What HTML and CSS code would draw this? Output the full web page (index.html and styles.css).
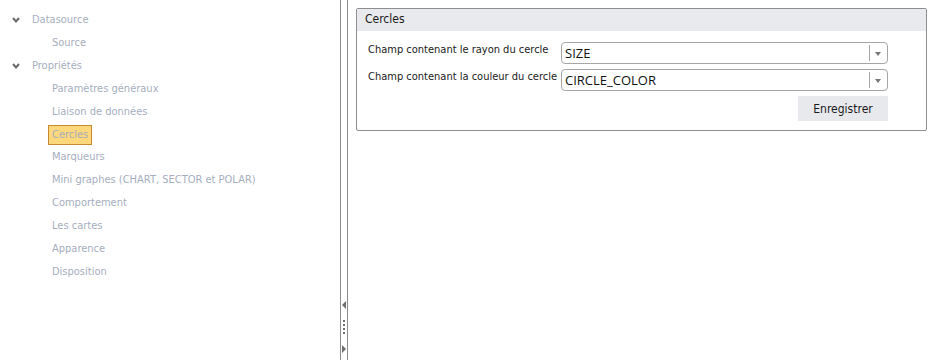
FILE: index.html
```html
<!DOCTYPE html>
<html lang="fr">
<head>
    <meta charset="UTF-8">
    <title>Configuration</title>
    <link rel="stylesheet" href="styles.css">
</head>
<body>
    <div class="layout">
        <div class="tree">
            <div class="node">
                <svg class="caret" width="8" height="6" viewBox="0 0 8 6"><path d="M1 1 L4 4.5 L7 1" fill="none" stroke="#6b6b6b" stroke-width="2"/></svg>
                <span class="label">Datasource</span>
            </div>
            <div class="child"><span class="label">Source</span></div>
            <div class="node">
                <svg class="caret" width="8" height="6" viewBox="0 0 8 6"><path d="M1 1 L4 4.5 L7 1" fill="none" stroke="#6b6b6b" stroke-width="2"/></svg>
                <span class="label">Propriétés</span>
            </div>
            <div class="child"><span class="label">Paramètres généraux</span></div>
            <div class="child"><span class="label">Liaison de données</span></div>
            <div class="child"><span class="label selected">Cercles</span></div>
            <div class="child"><span class="label">Marqueurs</span></div>
            <div class="child"><span class="label">Mini graphes (CHART, SECTOR et POLAR)</span></div>
            <div class="child"><span class="label">Comportement</span></div>
            <div class="child"><span class="label">Les cartes</span></div>
            <div class="child"><span class="label">Apparence</span></div>
            <div class="child"><span class="label">Disposition</span></div>
        </div>

        <div class="splitter">
            <div class="handle">
                <span class="arrow-left"></span>
                <span class="dots"><i></i><i></i><i></i><i></i></span>
                <span class="arrow-right"></span>
            </div>
        </div>

        <div class="content">
            <div class="panel">
                <div class="panel-header">Cercles</div>
                <div class="panel-body">
                    <div class="field">
                        <label>Champ contenant le rayon du cercle</label>
                        <div class="combo"><span class="combo-value">SIZE</span><span class="combo-btn"></span></div>
                    </div>
                    <div class="field">
                        <label>Champ contenant la couleur du cercle</label>
                        <div class="combo"><span class="combo-value">CIRCLE_COLOR</span><span class="combo-btn"></span></div>
                    </div>
                    <div class="actions">
                        <button type="button" class="btn">Enregistrer</button>
                    </div>
                </div>
            </div>
        </div>
    </div>
</body>
</html>
```

FILE: styles.css
```css
body {
    margin: 0;
    background-color: #ffffff;
    font-family: "DejaVu Sans Condensed", "DejaVu Sans", sans-serif;
    font-size: 11px;
}
.layout {
    display: flex;
    height: 360px;
}
.tree {
    width: 340px;
    padding-top: 9px;
    box-sizing: border-box;
}
.node, .child {
    display: flex;
    align-items: center;
    height: 22.85px;
}
.node {
    padding-left: 12px;
}
.child {
    padding-left: 48px;
}
.caret {
    margin-right: 11px;
}
.label {
    color: #a6aebe;
    padding: 2px 3px 3px;
    border: 1px solid transparent;
    white-space: nowrap;
}
.node .label {
    padding-left: 0;
}
.label.selected {
    background-color: #fdd77c;
    border-color: #c88a2e;
}
.splitter {
    width: 6px;
    border-left: 1px solid #8c8c8c;
    border-right: 1px solid #8c8c8c;
    display: flex;
    align-items: flex-end;
    justify-content: center;
}
.handle {
    display: flex;
    flex-direction: column;
    align-items: center;
    padding-bottom: 7px;
}
.arrow-left {
    width: 0;
    height: 0;
    border-top: 4px solid transparent;
    border-bottom: 4px solid transparent;
    border-right: 4px solid #6e6e6e;
}
.arrow-right {
    width: 0;
    height: 0;
    border-top: 4px solid transparent;
    border-bottom: 4px solid transparent;
    border-left: 4px solid #6e6e6e;
}
.dots {
    display: flex;
    flex-direction: column;
    gap: 2px;
    margin: 11px 0 11px;
}
.dots i {
    display: block;
    width: 2px;
    height: 2px;
    background-color: #6e6e6e;
}
.content {
    flex: 1;
    padding: 8px 15px 0 8px;
}
.panel {
    border: 1px solid #8e8e8e;
    border-radius: 2px;
}
.panel-header {
    background-color: #e9eaee;
    height: 22px;
    line-height: 21px;
    padding-left: 8px;
    font-size: 12px;
    color: #1a1a1a;
}
.panel-body {
    padding: 11px 38px 9px 11px;
}
.field {
    display: flex;
    align-items: flex-start;
    margin-bottom: 5px;
}
.field label {
    width: 193px;
    color: #1a1a1a;
    padding-top: 1px;
    white-space: nowrap;
}
.combo {
    flex: 1;
    display: flex;
    height: 22px;
    border: 1px solid #a6a6a6;
    border-radius: 4px;
    box-sizing: border-box;
}
.combo-value {
    flex: 1;
    padding-left: 3px;
    line-height: 21px;
    font-family: "Open Sans", sans-serif;
    font-size: 13px;
    color: #111111;
}
.combo-btn {
    width: 17px;
    border-left: 1px solid #a6a6a6;
    margin: 2px 0;
    position: relative;
}
.combo-btn::after {
    content: "";
    position: absolute;
    left: 5px;
    top: 7px;
    border-left: 3px solid transparent;
    border-right: 3px solid transparent;
    border-top: 4px solid #777777;
}
.actions {
    display: flex;
    justify-content: flex-end;
}
.btn {
    width: 90px;
    height: 25px;
    border: none;
    background-color: #e8e9ed;
    font-family: inherit;
    font-size: 12px;
    color: #1a1a1a;
}
```
